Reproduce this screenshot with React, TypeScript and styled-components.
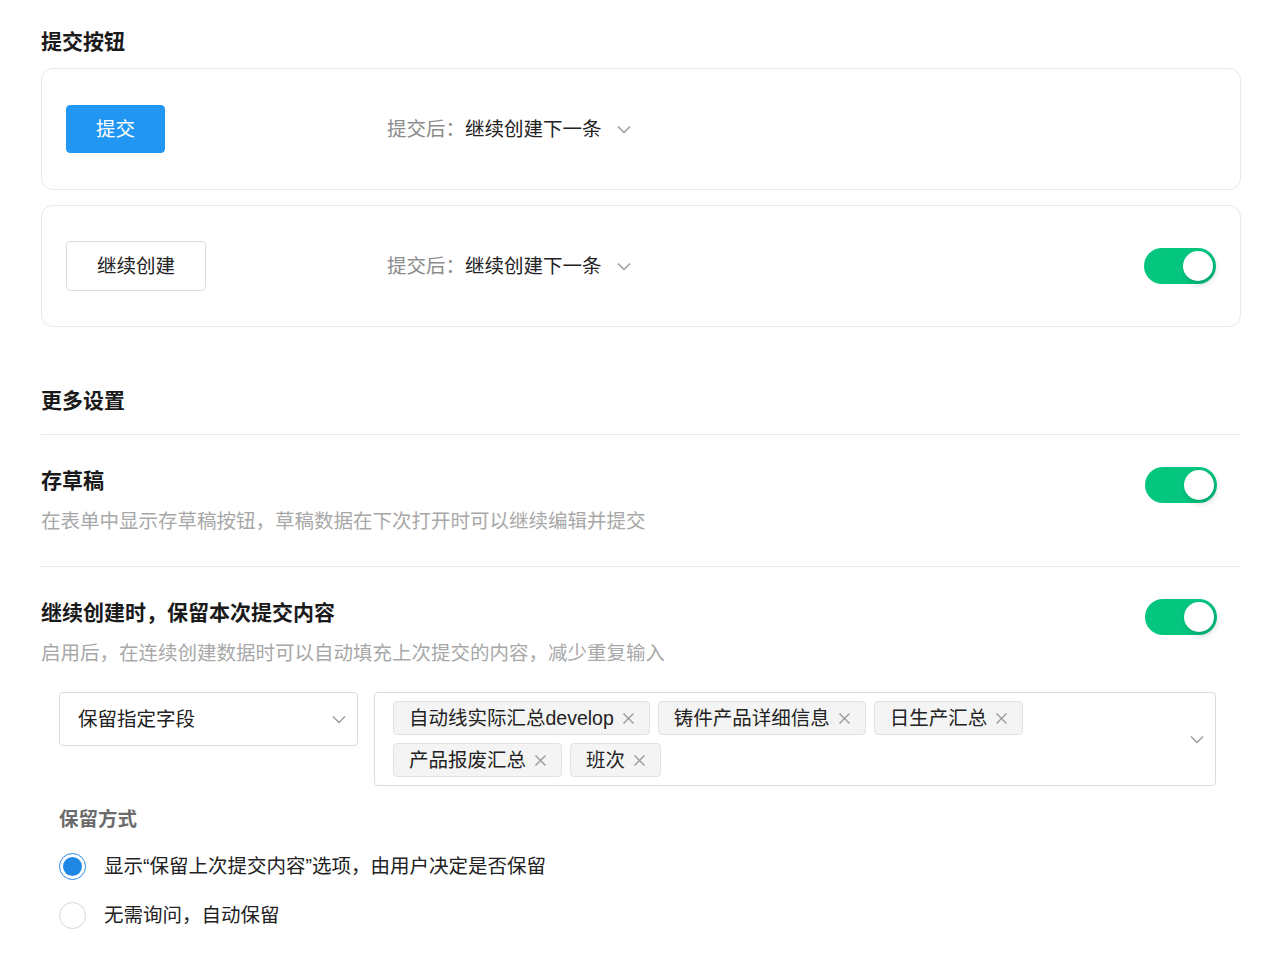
import React from "react";
import styled, { createGlobalStyle } from "styled-components";

const GlobalStyle = createGlobalStyle`
  html, body { margin: 0; padding: 0; background: #fff; }
  body {
    font-family: "Liberation Sans", "Noto Sans CJK SC", sans-serif;
    color: #222;
    -webkit-font-smoothing: antialiased;
  }
  * { box-sizing: border-box; }
`;

const Page = styled.div`
  width: 1281px;
  padding: 28px 40px 26px 41px;
`;

const SectionTitle = styled.h2<{ $mt?: number }>`
  margin: ${(p) => p.$mt ?? 0}px 0 0;
  font-size: 21px;
  line-height: 28px;
  font-weight: 700;
  color: #1a1a1a;
`;

const CardList = styled.div`
  display: flex;
  flex-direction: column;
  gap: 15px;
  margin-top: 12px;
`;

const Card = styled.div`
  display: grid;
  grid-template-columns: 321px auto 1fr auto;
  align-items: center;
  border: 1px solid #e8e8e8;
  border-radius: 12px;
  padding: 35px 24px;
  min-height: 122px;
`;

const ActionButton = styled.button<{ $primary?: boolean }>`
  justify-self: start;
  font-family: inherit;
  font-size: 19.5px;
  line-height: 28px;
  padding: ${(p) => (p.$primary ? "9px 29px" : "10px 30px")};
  border-radius: 4px;
  border: 1px solid ${(p) => (p.$primary ? "#2196f3" : "#dcdcdc")};
  background: ${(p) => (p.$primary ? "#2196f3" : "#fff")};
  color: ${(p) => (p.$primary ? "#fff" : "#222")};
  cursor: pointer;
`;

const AfterSelect = styled.div`
  display: flex;
  align-items: center;
  font-size: 19.5px;
  line-height: 28px;
`;

const AfterLabel = styled.span`
  color: #8c8c8c;
`;

const AfterValue = styled.span`
  color: #222;
`;

const ChevronWrap = styled.span<{ $ml?: number }>`
  display: inline-flex;
  margin-left: ${(p) => p.$ml ?? 0}px;
  color: #9a9a9a;
`;

const Chevron = ({ ml }: { ml?: number }) => (
  <ChevronWrap $ml={ml}>
    <svg width="14" height="9" viewBox="0 0 14 9" fill="none">
      <polyline points="1,1.5 7,7.5 13,1.5" stroke="currentColor" strokeWidth="1.4" />
    </svg>
  </ChevronWrap>
);

const ToggleTrack = styled.div`
  position: relative;
  width: 72px;
  height: 36px;
  border-radius: 18px;
  background: #04c67f;
  flex-shrink: 0;
`;

const ToggleKnob = styled.div`
  position: absolute;
  top: 3px;
  right: 3px;
  width: 30px;
  height: 30px;
  border-radius: 50%;
  background: #fff;
  box-shadow: 2px 3px 6px rgba(0, 0, 0, 0.18);
`;

const Toggle = () => (
  <ToggleTrack>
    <ToggleKnob />
  </ToggleTrack>
);

const Divider = styled.div<{ $mt?: number }>`
  height: 1px;
  background: #e8e8e8;
  margin-top: ${(p) => p.$mt ?? 0}px;
`;

const SettingBlock = styled.div<{ $pb?: number }>`
  padding: 32px 0 ${(p) => p.$pb ?? 0}px;
`;

const SettingHead = styled.div`
  display: flex;
  justify-content: space-between;
  align-items: flex-start;
  padding-right: 24px;
`;

const SettingText = styled.div`
  display: flex;
  flex-direction: column;
  gap: 12px;
`;

const SettingTitle = styled.div`
  font-size: 21px;
  line-height: 28px;
  font-weight: 700;
  color: #1a1a1a;
`;

const SettingDesc = styled.div`
  font-size: 19.5px;
  line-height: 28px;
  color: #a8a8a8;
`;

const SubArea = styled.div`
  padding: 0 25px 0 18px;
  margin-top: 25px;
`;

const FieldRow = styled.div`
  display: flex;
  gap: 16px;
  align-items: flex-start;
`;

const SingleSelect = styled.div`
  width: 299px;
  height: 54px;
  border: 1px solid #dcdcdc;
  border-radius: 4px;
  display: flex;
  align-items: center;
  justify-content: space-between;
  padding: 0 11px 0 18px;
  font-size: 19.5px;
  line-height: 28px;
  color: #222;
`;

const MultiSelect = styled.div`
  flex: 1;
  border: 1px solid #dcdcdc;
  border-radius: 4px;
  display: flex;
  align-items: center;
  padding: 8px 11px 8px 18px;
`;

const TagWrap = styled.div`
  flex: 1;
  display: flex;
  flex-wrap: wrap;
  gap: 8px;
`;

const Tag = styled.span`
  display: inline-flex;
  align-items: center;
  gap: 8px;
  height: 34px;
  padding: 0 14px 0 15px;
  background: #f4f4f4;
  border: 1px solid #e2e2e2;
  border-radius: 4px;
  font-size: 19.5px;
  line-height: 28px;
  color: #222;
`;

const CloseIcon = styled.span`
  display: inline-flex;
  color: #9a9a9a;
`;

const Close = () => (
  <CloseIcon>
    <svg width="13" height="13" viewBox="0 0 13 13" fill="none">
      <path d="M1.5 1.5 L11.5 11.5 M11.5 1.5 L1.5 11.5" stroke="currentColor" strokeWidth="1.4" />
    </svg>
  </CloseIcon>
);

const ModeTitle = styled.div`
  margin-top: 19px;
  font-size: 19.5px;
  line-height: 28px;
  font-weight: 700;
  color: #6b6b6b;
`;

const RadioList = styled.div`
  margin-top: 19px;
  display: flex;
  flex-direction: column;
  gap: 21px;
`;

const RadioRow = styled.label`
  display: flex;
  align-items: center;
  gap: 18px;
  font-size: 19.5px;
  line-height: 28px;
  color: #222;
`;

const RadioCircle = styled.span<{ $checked?: boolean }>`
  position: relative;
  width: 27px;
  height: 27px;
  border-radius: 50%;
  border: 1.5px solid ${(p) => (p.$checked ? "#2b8ce8" : "#d4d4d4")};
  background: #fff;
  flex-shrink: 0;
  &::after {
    content: "";
    position: absolute;
    inset: 3px;
    border-radius: 50%;
    background: ${(p) => (p.$checked ? "#1f88e5" : "transparent")};
  }
`;

const tags = ["自动线实际汇总develop", "铸件产品详细信息", "日生产汇总", "产品报废汇总", "班次"];

export default function App() {
  return (
    <>
      <GlobalStyle />
      <Page>
        <SectionTitle>提交按钮</SectionTitle>
        <CardList>
          <Card>
            <ActionButton $primary>提交</ActionButton>
            <AfterSelect>
              <AfterLabel>提交后：</AfterLabel>
              <AfterValue>继续创建下一条</AfterValue>
              <Chevron ml={15} />
            </AfterSelect>
          </Card>
          <Card>
            <ActionButton>继续创建</ActionButton>
            <AfterSelect>
              <AfterLabel>提交后：</AfterLabel>
              <AfterValue>继续创建下一条</AfterValue>
              <Chevron ml={15} />
            </AfterSelect>
            <span />
            <Toggle />
          </Card>
        </CardList>

        <SectionTitle $mt={60}>更多设置</SectionTitle>
        <Divider $mt={19} />

        <SettingBlock $pb={31}>
          <SettingHead>
            <SettingText>
              <SettingTitle>存草稿</SettingTitle>
              <SettingDesc>在表单中显示存草稿按钮，草稿数据在下次打开时可以继续编辑并提交</SettingDesc>
            </SettingText>
            <Toggle />
          </SettingHead>
        </SettingBlock>
        <Divider />

        <SettingBlock>
          <SettingHead>
            <SettingText>
              <SettingTitle>继续创建时，保留本次提交内容</SettingTitle>
              <SettingDesc>启用后，在连续创建数据时可以自动填充上次提交的内容，减少重复输入</SettingDesc>
            </SettingText>
            <Toggle />
          </SettingHead>
          <SubArea>
            <FieldRow>
              <SingleSelect>
                <span>保留指定字段</span>
                <Chevron />
              </SingleSelect>
              <MultiSelect>
                <TagWrap>
                  {tags.map((t) => (
                    <Tag key={t}>
                      {t}
                      <Close />
                    </Tag>
                  ))}
                </TagWrap>
                <Chevron />
              </MultiSelect>
            </FieldRow>
            <ModeTitle>保留方式</ModeTitle>
            <RadioList>
              <RadioRow>
                <RadioCircle $checked />
                显示“保留上次提交内容”选项，由用户决定是否保留
              </RadioRow>
              <RadioRow>
                <RadioCircle />
                无需询问，自动保留
              </RadioRow>
            </RadioList>
          </SubArea>
        </SettingBlock>
      </Page>
    </>
  );
}
